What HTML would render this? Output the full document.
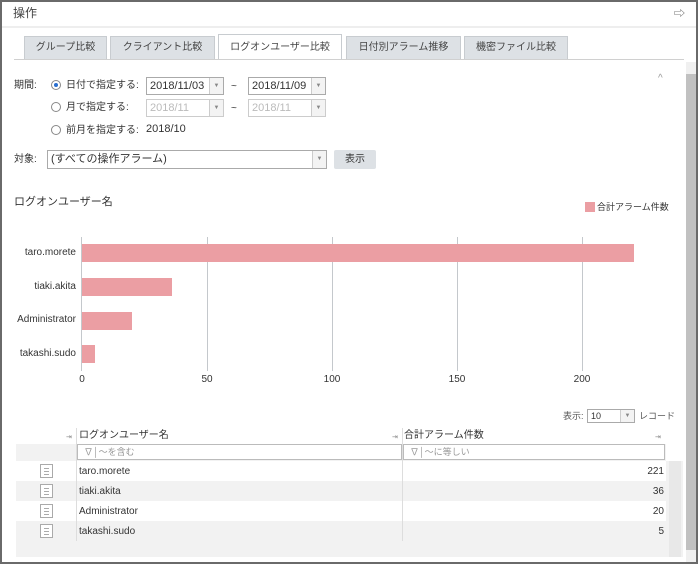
<!DOCTYPE html>
<html><head><meta charset="utf-8"><style>
*{box-sizing:border-box;margin:0;padding:0}
body{width:698px;height:564px;font-family:"Liberation Sans","Noto Sans CJK JP",sans-serif;font-size:10px;line-height:13px;color:#333;background:#fff;position:relative;overflow:hidden}
.frame{position:absolute;left:0;top:0;width:698px;height:564px;border:2px solid #6a6a6a}
.abs{position:absolute;white-space:nowrap}
.tab{position:absolute;top:36px;height:23px;background:#dde1e5;border:1px solid #c8ccd0;border-bottom:none;font-size:10px;line-height:22px;text-align:center;color:#444}
.tab.on{background:#fff;top:34px;height:26px;line-height:25px}
.sel{position:absolute;height:18px;border:1px solid #aaa;background:#fff;font-size:11px;line-height:16px;padding-left:3px}
.sel .dd{position:absolute;right:0;top:0;width:14px;height:16px;border-left:1px solid #ccc;background:#f3f3f3;color:#888;font-size:6px;text-align:center;line-height:16px}
.sel.dis{border-color:#ccc;color:#bbb}
.radio{position:absolute;width:10px;height:10px;border:1px solid #888;border-radius:50%;background:#fff}
.radio.on::after{content:"";position:absolute;left:2px;top:2px;width:4px;height:4px;border-radius:50%;background:#2a6fd0}
.grid{position:absolute;top:237px;width:1px;height:134px;background:#c4c8cc}
.bar{position:absolute;left:82px;height:18px;background:#eb9ea3}
.yl{position:absolute;right:622px;font-size:10px;text-align:right;white-space:nowrap}
.xl{position:absolute;top:373px;font-size:10px;width:30px;margin-left:-15px;text-align:center}
.row{position:absolute;left:16px;width:650px;height:20px;font-size:10px}
.row span{position:absolute;top:4px;line-height:13px}
.row.g{background:#f2f2f2}
.ic{position:absolute;left:24px;top:3px;width:13px;height:14px;border:1px solid #aaa;background:#fff}
.ic i{position:absolute;left:3px;width:5px;height:1px;background:#aaa}
</style></head><body>
<div class="frame"></div>
<div class="abs" style="left:13px;top:7px;font-size:12px;color:#444">操作</div>
<div class="abs" style="left:674px;top:8px;font-size:11px;color:#555">⇨</div>
<div class="abs" style="left:2px;top:26px;width:694px;height:2px;background:#eee"></div>
<div class="tab" style="left:24px;width:83px">グループ比較</div>
<div class="tab" style="left:110px;width:105px">クライアント比較</div>
<div class="tab on" style="left:218px;width:124px">ログオンユーザー比較</div>
<div class="tab" style="left:346px;width:115px">日付別アラーム推移</div>
<div class="tab" style="left:464px;width:104px">機密ファイル比較</div>
<div class="abs" style="left:14px;top:59px;width:670px;height:1px;background:#d0d0d0"></div>
<div class="abs" style="left:686px;top:62px;width:10px;height:500px;background:#f0f0f0"></div>
<div class="abs" style="left:686px;top:74px;width:10px;height:476px;background:#c1c1c1"></div>
<div class="abs" style="left:658px;top:72px;color:#999;font-size:10px">^</div>

<div class="abs" style="left:14px;top:79px">期間:</div>
<div class="radio on" style="left:51px;top:80px"></div>
<div class="abs" style="left:66px;top:79px">日付で指定する:</div>
<div class="sel" style="left:146px;top:77px;width:78px">2018/11/03<div class="dd">▼</div></div>
<div class="abs" style="left:231px;top:80px">~</div>
<div class="sel" style="left:248px;top:77px;width:78px">2018/11/09<div class="dd">▼</div></div>
<div class="radio" style="left:51px;top:102px"></div>
<div class="abs" style="left:66px;top:101px">月で指定する:</div>
<div class="sel dis" style="left:146px;top:99px;width:78px">2018/11<div class="dd">▼</div></div>
<div class="abs" style="left:231px;top:102px">~</div>
<div class="sel dis" style="left:248px;top:99px;width:78px">2018/11<div class="dd">▼</div></div>
<div class="radio" style="left:51px;top:125px"></div>
<div class="abs" style="left:66px;top:124px">前月を指定する:</div>
<div class="abs" style="left:146px;top:123px;font-size:11px">2018/10</div>
<div class="abs" style="left:14px;top:153px">対象:</div>
<div class="sel" style="left:47px;top:150px;width:280px;height:19px;line-height:17px">(すべての操作アラーム)<div class="dd" style="height:17px">▼</div></div>
<div class="abs" style="left:334px;top:150px;width:42px;height:19px;background:#dde1e5;border-radius:2px;text-align:center;line-height:19px">表示</div>

<div class="abs" style="left:14px;top:196px;font-size:11px">ログオンユーザー名</div>
<div class="abs" style="left:585px;top:202px;width:10px;height:10px;background:#eb9ea3"></div>
<div class="abs" style="left:597px;top:201px;font-size:9px">合計アラーム件数</div>
<div class="abs" style="left:81px;top:237px;width:1px;height:134px;background:#c4c8cc"></div>
<div class="grid" style="left:207px"></div><div class="grid" style="left:332px"></div><div class="grid" style="left:457px"></div><div class="grid" style="left:582px"></div>
<div class="bar" style="top:244px;width:552px"></div>
<div class="bar" style="top:278px;width:90px"></div>
<div class="bar" style="top:312px;width:50px"></div>
<div class="bar" style="top:345px;width:13px"></div>
<div class="yl" style="top:246px">taro.morete</div>
<div class="yl" style="top:280px">tiaki.akita</div>
<div class="yl" style="top:313px">Administrator</div>
<div class="yl" style="top:347px">takashi.sudo</div>
<div class="xl" style="left:82px">0</div><div class="xl" style="left:207px">50</div><div class="xl" style="left:332px">100</div><div class="xl" style="left:457px">150</div><div class="xl" style="left:582px">200</div>

<div class="abs" style="left:563px;top:410px;font-size:9px;color:#555">表示:</div>
<div class="sel" style="left:587px;top:409px;width:48px;height:14px;font-size:9px;line-height:12px">10<div class="dd" style="height:12px;line-height:12px">▼</div></div>
<div class="abs" style="left:639px;top:410px;font-size:9px;color:#555">レコード</div>
<div class="abs" style="left:16px;top:444px;width:650px;height:17px;background:#f2f2f2"></div>
<div class="abs" style="left:16px;top:461px;width:667px;height:96px;background:#f2f2f2"></div>
<div class="abs" style="left:66px;top:431px;font-size:7px;color:#888">⇥</div>
<div class="abs" style="left:79px;top:429px;font-size:10px">ログオンユーザー名</div>
<div class="abs" style="left:392px;top:431px;font-size:7px;color:#888">⇥</div>
<div class="abs" style="left:404px;top:429px;font-size:10px">合計アラーム件数</div>
<div class="abs" style="left:655px;top:431px;font-size:7px;color:#888">⇥</div>
<div class="abs" style="left:77px;top:444px;width:325px;height:16px;border:1px solid #bbb;background:#fff;font-size:9px;color:#999;padding-left:6px;line-height:14px">∇│～を含む</div>
<div class="abs" style="left:403px;top:444px;width:262px;height:16px;border:1px solid #bbb;background:#fff;font-size:9px;color:#999;padding-left:6px;line-height:14px">∇│～に等しい</div>
<div class="row" style="top:461px;background:#fff"><div class="ic"><i style="top:3px"></i><i style="top:6px"></i><i style="top:9px"></i></div><span style="left:63px">taro.morete</span><span style="right:2px">221</span></div>
<div class="row g" style="top:481px"><div class="ic"><i style="top:3px"></i><i style="top:6px"></i><i style="top:9px"></i></div><span style="left:63px">tiaki.akita</span><span style="right:2px">36</span></div>
<div class="row" style="top:501px;background:#fff"><div class="ic"><i style="top:3px"></i><i style="top:6px"></i><i style="top:9px"></i></div><span style="left:63px">Administrator</span><span style="right:2px">20</span></div>
<div class="row g" style="top:521px"><div class="ic"><i style="top:3px"></i><i style="top:6px"></i><i style="top:9px"></i></div><span style="left:63px">takashi.sudo</span><span style="right:2px">5</span></div>
<div class="abs" style="left:76px;top:428px;width:1px;height:113px;background:#ddd"></div>
<div class="abs" style="left:402px;top:428px;width:1px;height:113px;background:#ddd"></div>
<div class="abs" style="left:669px;top:461px;width:12px;height:96px;background:#e8e8e8"></div>
</body></html>
